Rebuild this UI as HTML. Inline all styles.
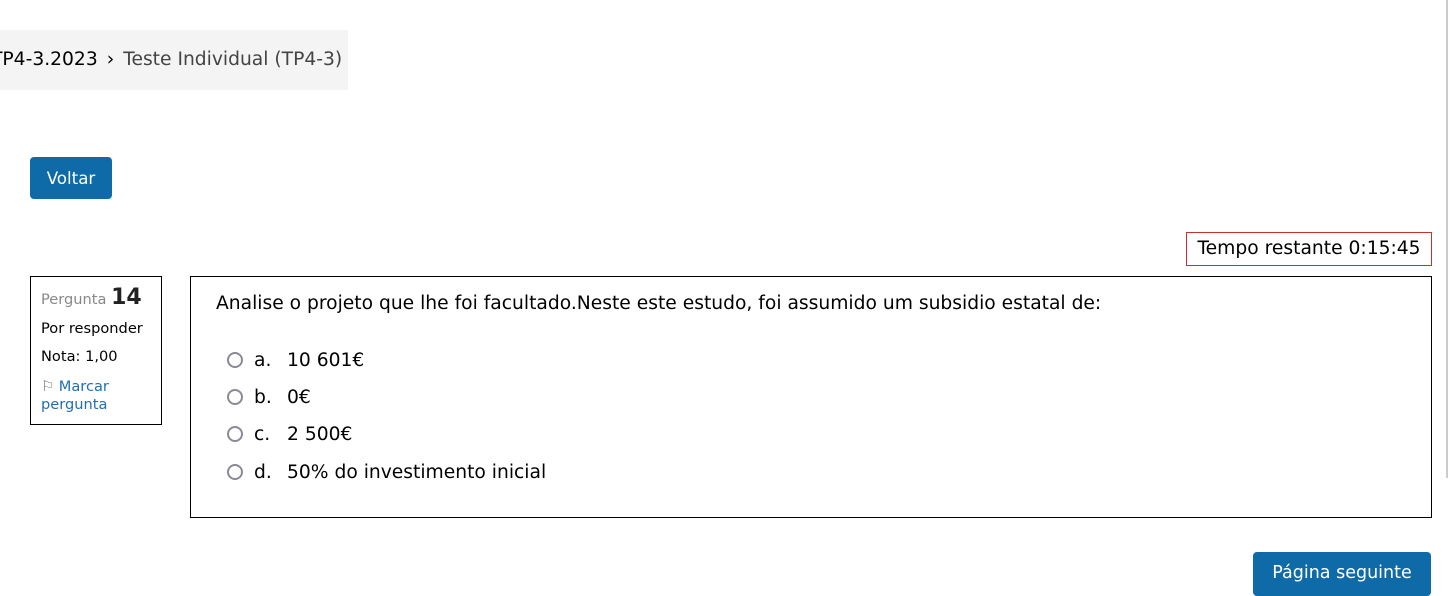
<!DOCTYPE html>
<html><head><meta charset="utf-8"><style>
body{margin:0;width:1450px;height:590px;overflow:hidden;background:#fff;font-family:"DejaVu Sans","Liberation Sans",sans-serif;color:#000;position:relative}
.abs{position:absolute}
.bc{left:0;top:30px;width:348px;height:60px;background:#f4f4f4;font-size:18.7px;line-height:60px;white-space:nowrap;overflow:hidden}
.btn{background:#0f6aa8;color:#fff;border-radius:4px;font-size:16.7px;text-align:center}
.info{left:30px;top:276px;width:130px;height:147px;border:1px solid #000;font-size:14.6px}
.q{left:190px;top:276px;width:1240px;height:240px;border:1px solid #000}
.opt{position:absolute;left:36px;font-size:18.7px;white-space:nowrap}
.opt b{font-weight:normal;display:inline-block;width:33px}
.rad{display:inline-block;width:12px;height:12px;border:2px solid #8a8a96;border-radius:50%;vertical-align:-2px;margin-right:11px}
</style></head><body>
<div class="abs" style="left:1446px;top:0;width:2px;height:478px;background:#ccc"></div>
<div class="abs bc"><span style="margin-left:-9px">TP4-3.2023</span><span style="margin:0 9px">›</span><span style="color:#444">Teste Individual (TP4-3)</span></div>
<div class="abs btn" style="left:30px;top:157px;width:82px;height:42px;line-height:42px">Voltar</div>
<div class="abs" style="left:1186px;top:232px;width:244px;height:32px;border:1px solid #c9302c;font-size:18.7px;line-height:32px;text-align:center">Tempo restante 0:15:45</div>
<div class="abs info">
<div class="abs" style="left:10px;top:8px;white-space:nowrap"><span style="color:#888">Pergunta</span> <b style="font-size:22px;color:#222">14</b></div>
<div class="abs" style="left:10px;top:43px">Por responder</div>
<div class="abs" style="left:10px;top:71px">Nota: 1,00</div>
<div class="abs" style="left:10px;top:101px;color:#1f6fb2;line-height:18px"><span style="color:#777">⚐</span> Marcar<br>pergunta</div>
</div>
<div class="abs q">
<div class="abs" style="left:25px;top:16px;font-size:18.7px;white-space:nowrap">Analise o projeto que lhe foi facultado.Neste este estudo, foi assumido um subsidio estatal de:</div>
<div class="opt" style="top:73px"><span class="rad"></span><b>a.</b>10 601€</div>
<div class="opt" style="top:110px"><span class="rad"></span><b>b.</b>0€</div>
<div class="opt" style="top:147px"><span class="rad"></span><b>c.</b>2 500€</div>
<div class="opt" style="top:185px"><span class="rad"></span><b>d.</b>50% do investimento inicial</div>
</div>
<div class="abs btn" style="left:1253px;top:552px;width:178px;height:44px;line-height:42px;font-size:17.5px">Página seguinte</div>
</body></html>
